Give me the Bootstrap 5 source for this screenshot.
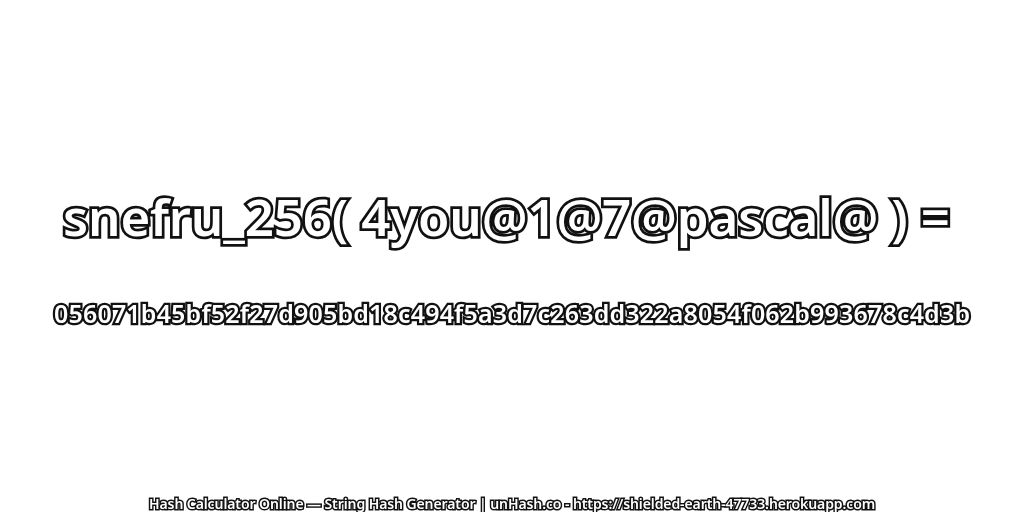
<!DOCTYPE html>
<html><head><meta charset="utf-8">
<link href="https://cdn.jsdelivr.net/npm/bootstrap@5.3.0/dist/css/bootstrap.min.css" rel="stylesheet">
<style>
html,body{height:100%;margin:0;background:#fff}
.stage{height:512px;font-family:"Noto Sans","DejaVu Sans",sans-serif;color:#fff;overflow:hidden}
.outl{paint-order:stroke fill;white-space:nowrap;line-height:1;font-weight:600;will-change:transform}
.t1{font-size:51px;-webkit-text-stroke:5.5px #111;margin-top:191px;letter-spacing:-.15px;padding-right:12px}
.t2{font-size:25px;-webkit-text-stroke:4.5px #111;margin-top:59px;letter-spacing:.17px}
.t3{font-size:14px;-webkit-text-stroke:3px #111;margin-top:auto;margin-bottom:1px;letter-spacing:-.09px}
</style></head><body>
<div class="stage d-flex flex-column align-items-center text-center">
<div class="outl t1">snefru_256( 4you@1@7@pascal@ ) =</div>
<div class="outl t2">056071b45bf52f27d905bd18c494f5a3d7c263dd322a8054f062b993678c4d3b</div>
<div class="outl t3">Hash Calculator Online — String Hash Generator | unHash.co - https://shielded-earth-47733.herokuapp.com</div>
</div>
<script src="https://cdn.jsdelivr.net/npm/bootstrap@5.3.0/dist/js/bootstrap.bundle.min.js"></script>
</body></html>
